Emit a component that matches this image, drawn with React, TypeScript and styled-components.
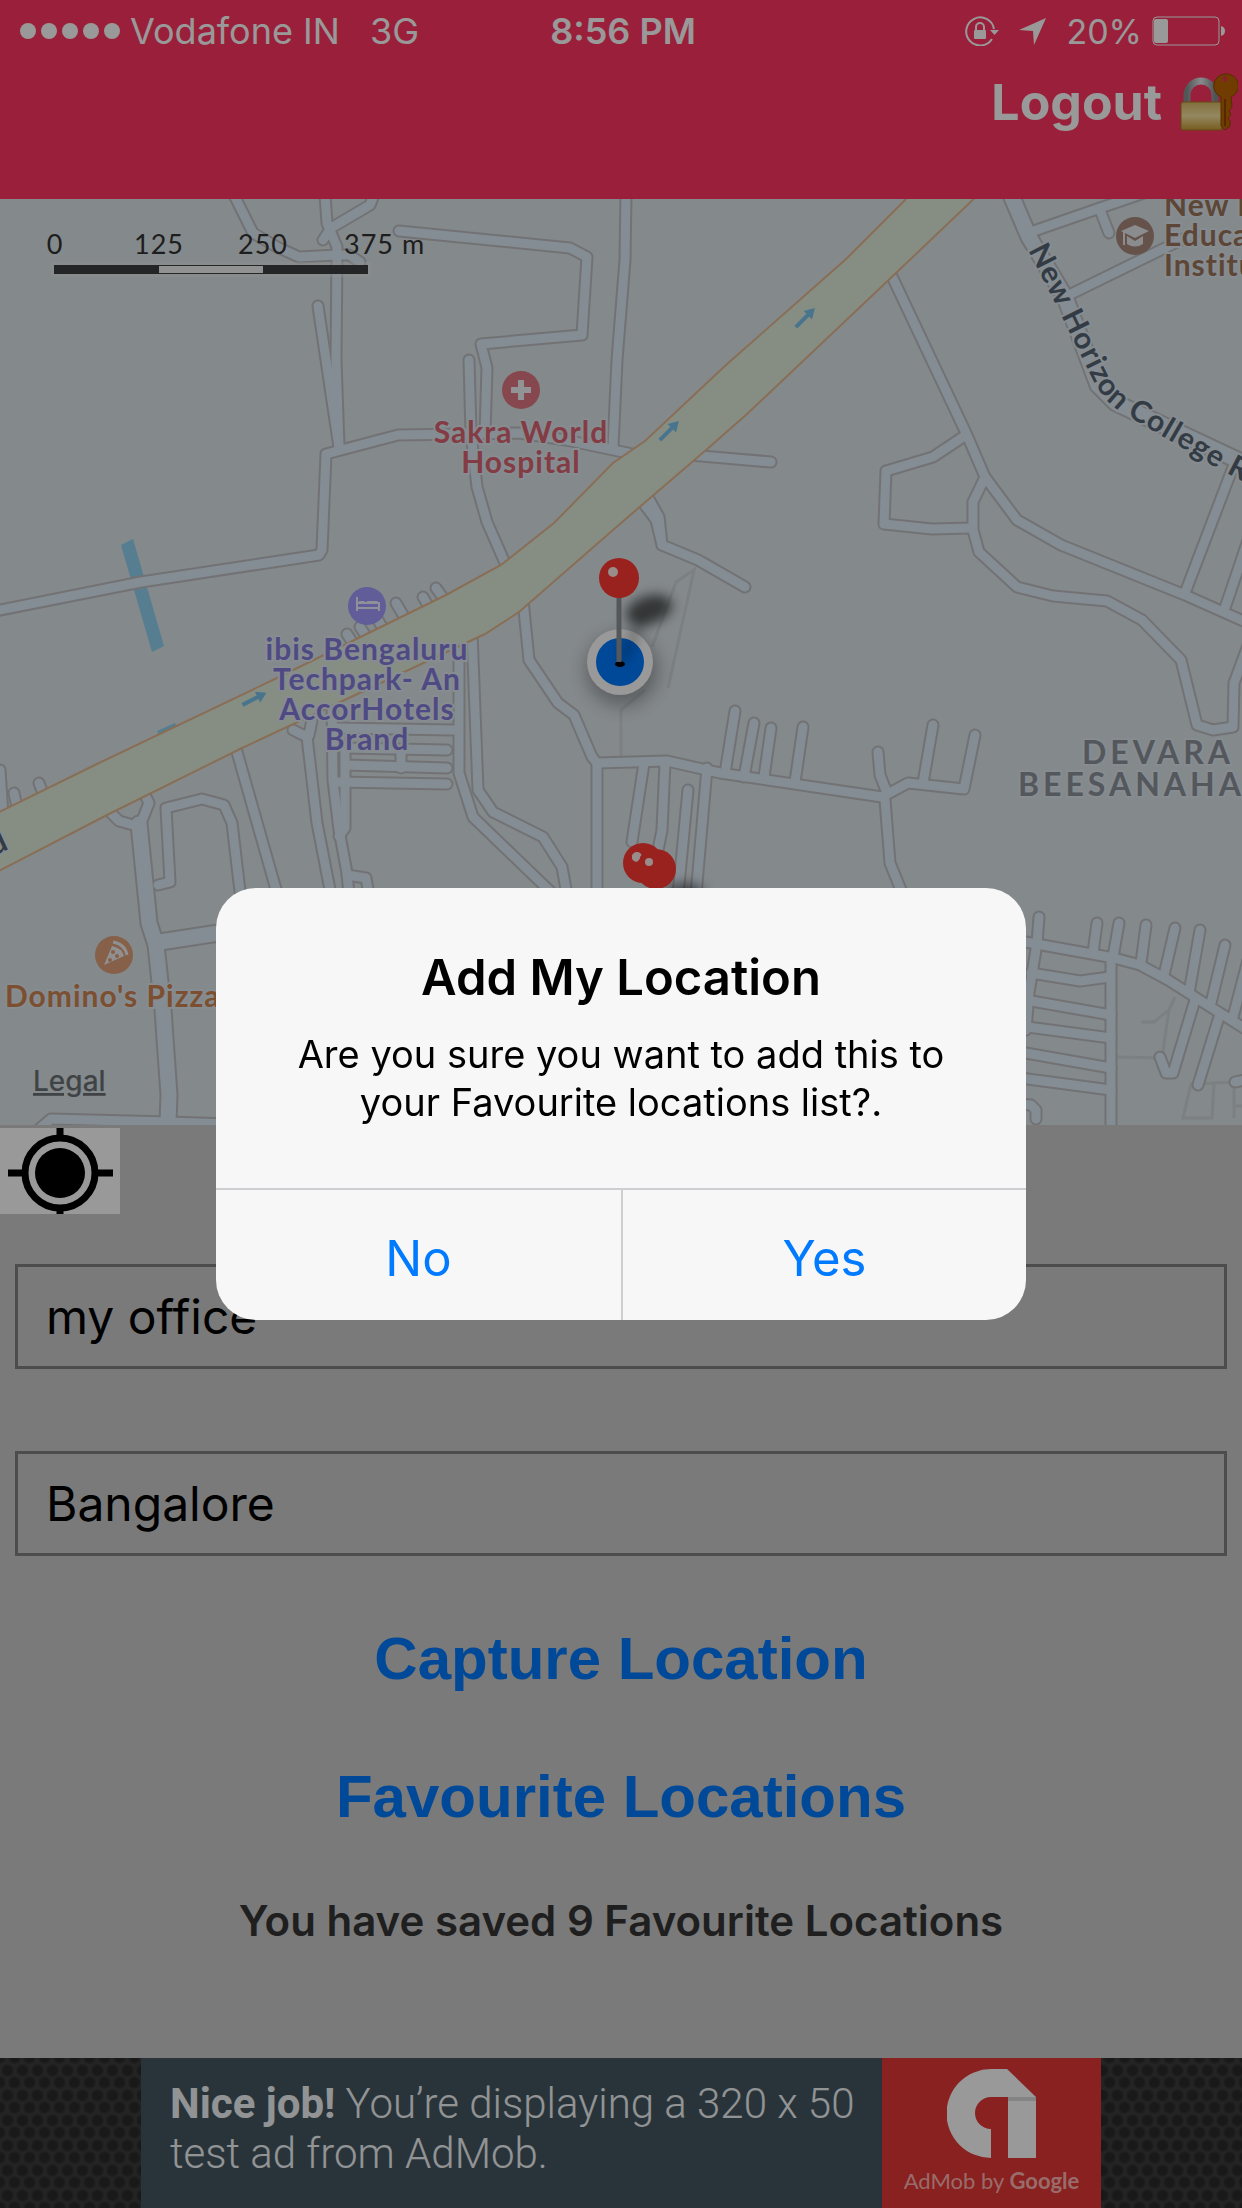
import React, { useId, useState } from 'react';
import styled, { createGlobalStyle } from 'styled-components';

const GlobalStyle = createGlobalStyle`
  * { box-sizing: border-box; }
  body { margin: 0; background: #cbcbcb; font-family: Inter, "Liberation Sans", sans-serif; }
  button { border: 0; padding: 0; background: none; font-family: inherit; }
`;

const Screen = styled.div`
  min-height: 100vh;
  display: flex;
  flex-direction: column;
  overflow: hidden;
`;

const Header = styled.header`
  height: 199px;
  background: #ff3562;
  color: #fff;
`;

const StatusBar = styled.div`
  display: grid;
  grid-template-columns: 1fr auto 1fr;
  align-items: center;
  height: 62px;
  padding: 0 16px 0 20px;
  font-size: 36px;
`;

const StatusGroup = styled.div`
  display: flex;
  align-items: center;
  gap: 10px;
`;

const StatusIcons = styled.div`
  display: flex;
  align-items: center;
  justify-content: flex-end;
  gap: 20px;
  font-size: 34px;
`;

const SignalDots = styled.div`
  display: flex;
  gap: 5px;
  i { width: 16px; height: 16px; border-radius: 50%; background: #fff; }
`;

const Network = styled.span`
  padding-left: 20px;
`;

const Time = styled.span`
  font-weight: 600;
`;

const NavBar = styled.div`
  display: flex;
  justify-content: flex-end;
  padding: 4px 4px 0 0;
`;

const LogoutButton = styled.button`
  display: flex;
  align-items: center;
  gap: 18px;
  height: 72px;
  color: #fff;
  font-size: 50px;
  font-weight: 700;
`;

const MapFrame = styled.section`
  height: 926px;
  overflow: hidden;
  background: #dce4e9;
`;

const MapCanvas = styled.svg`
  display: block;
  width: 100%;
  height: 100%;
`;

const PoiLabel = styled.text`
  font-family: Lato, "Open Sans", sans-serif;
  font-size: 30px;
  font-weight: 700;
  letter-spacing: 1px;
  paint-order: stroke;
  stroke: #dfe9f1;
  stroke-width: 4px;
`;

const RoadLabel = styled(PoiLabel)`
  fill: #566574;
`;

const AreaLabel = styled(PoiLabel)`
  fill: #8c939c;
  font-size: 32px;
  letter-spacing: 4px;
`;

const ScaleLabel = styled.text`
  font-family: Lato, "Open Sans", sans-serif;
  font-size: 27px;
  letter-spacing: 1px;
  fill: #333;
`;

const LegalLabel = styled.text`
  font-size: 28px;
  font-weight: 500;
  fill: #6b7074;
  text-decoration: underline;
`;

const LocateButton = styled.button`
  display: block;
  width: 120px;
  height: 86px;
  margin-top: 3px;
  background: #fff;
  svg { display: block; }
`;

const Form = styled.form`
  display: flex;
  flex-direction: column;
  gap: 82px;
  padding: 50px 15px 0;
`;

const Field = styled.input`
  width: 100%;
  height: 105px;
  padding: 0 28px;
  border: 3px solid #808080;
  border-radius: 0;
  background: transparent;
  color: #000;
  font-family: inherit;
  font-size: 48px;
  outline: 0;
`;

const Actions = styled.div`
  display: flex;
  flex-direction: column;
  align-items: center;
  gap: 38px;
  padding-top: 53px;
`;

const ActionButton = styled.button`
  color: #007aff;
  font-family: "Liberation Sans", Arial, sans-serif;
  font-size: 60px;
  font-weight: 700;
  line-height: 100px;
`;

const SavedNote = styled.p`
  margin: 48px 0 60px;
  color: #353535;
  text-align: center;
  font-size: 42px;
  font-weight: 600;
  line-height: 52px;
`;

const AdStrip = styled.aside`
  display: flex;
  justify-content: center;
  height: 150px;
  margin-top: auto;
  background-color: #3c3c3c;
  background-image: radial-gradient(circle, #2a2a2a 4px, transparent 7px),
    radial-gradient(circle, #2a2a2a 4px, transparent 7px);
  background-size: 15px 25px;
  background-position: 0 0, 7px 12px;
`;

const AdCopy = styled.p`
  width: 741px;
  margin: 0;
  padding: 21px 0 0 29px;
  background: #445862;
  color: #f4f6f7;
  font-family: Roboto, sans-serif;
  font-size: 42px;
  font-weight: 300;
  line-height: 50px;
  b { font-weight: 700; }
`;

const AdBrand = styled.div`
  display: flex;
  flex-direction: column;
  align-items: center;
  width: 219px;
  padding-top: 10px;
  background: #e33735;
  color: #ffb5b2;
  font-family: Lato, sans-serif;
  font-size: 22px;
  line-height: 28px;
  svg { margin-bottom: 9px; }
`;

const Backdrop = styled.div`
  position: fixed;
  inset: 0;
  display: flex;
  align-items: center;
  justify-content: center;
  background: rgba(0, 0, 0, 0.4);
`;

const Dialog = styled.div`
  width: 810px;
  max-width: 90vw;
  overflow: hidden;
  border-radius: 40px;
  background: #f7f7f7;
  color: #000;
  text-align: center;
`;

const DialogBody = styled.div`
  padding: 58px 48px 62px;
`;

const DialogTitle = styled.h2`
  margin: 0 0 20px;
  font-size: 49px;
  font-weight: 600;
  line-height: 64px;
`;

const DialogText = styled.p`
  margin: 0;
  font-size: 38px;
  line-height: 48px;
`;

const DialogActions = styled.div`
  display: grid;
  grid-template-columns: 1fr 1fr;
  border-top: 2px solid #cdcdd2;
`;

const DialogButton = styled.button`
  height: 130px;
  padding-top: 6px;
  color: #007aff;
  font-size: 49px;
  & + & { border-left: 2px solid #cdcdd2; }
`;

const roads = [
  'M234 195L253 233L277 247L299 257L337 255L349 255L360 262',
  'M325 195L327 223L337 247L336 360L339 447',
  'M374 195L370 205L331 228L323 240',
  'M399 231L570 248L587 257L582 335L481 344L487 368L485 433',
  'M318 306L330 387L339 447',
  'M-5 611L141 582L319 555L322 550L326 454L398 435L519 433L566 440L637 455',
  'M469 360L471 433L477 487L487 522L505 563',
  'M626 195L625 260L617 360L613 447',
  'M690 455L771 462',
  'M645 492L659 517L662 545L698 560L745 587',
  'M641 500L656 520L662 545',
  'M889 270L966 433L985 477L1017 520L1061 545L1185 595L1250 624',
  'M966 435L933 457L886 471L884 524L932 529L971 528',
  'M985 477L973 502L973 530L979 552L1017 587L1053 596L1107 601L1142 620L1181 660L1197 725L1213 730L1233 727L1234 683L1250 640',
  'M1233 467L1185 593',
  'M1248 540L1225 608',
  'M1031 232L1100 208L1147 192',
  'M1100 210L1109 233',
  'M1069 295L1175 243L1195 233',
  'M396 603L406 620', 'M423 597L432 612', 'M436 588L446 602', 'M347 634L356 648', 'M360 627L370 642', 'M378 620L386 634',
  'M14 793L18 812', 'M39 783L44 796', 'M0 770L3 815',
  'M145 795L149 803L143 818L140 827',
  'M109 811L119 821L137 826',
  'M158 885L170 882L166 808L202 799L224 805L232 823L241 900',
  'M235 745L279 900',
  'M293 730L303 735L309 735L312 720', 'M307 737L317 823L331 895',
  'M332 700L333 780L339 830L347 873L349 895',
  'M345 745L345 828L339 836', 'M347 875L366 878L369 895',
  'M337 728L453 730', 'M345 748L447 750', 'M345 765L447 768', 'M337 782L447 784', 'M401 750L401 768',
  'M459 640L459 773L473 817L556 897',
  'M472 632L478 790L493 812L543 837L562 867L567 895',
  'M523 600L529 660L558 703L574 715L592 757L597 763L667 761L720 773L882 797L908 783L964 789L975 735',
  'M597 763L597 895',
  'M933 725L923 783', 'M878 752L880 775L887 793', 'M885 800L890 863L903 895',
  'M735 711L725 773', 'M754 723L744 777', 'M771 728L764 777', 'M803 727L795 782',
  'M644 763L632 842', 'M665 763L662 830L656 860', 'M688 790L678 895', 'M707 768L696 895',
  'M1020 941L1114 958L1140 965L1168 980L1250 1032',
  'M1039 917L1037 943L1029 993L1026 1030',
  'M1097 923L1093 953', 'M1119 923L1113 957', 'M1146 925L1141 963', 'M1175 928L1164 975',
  'M1200 930L1189 993', 'M1225 945L1211 1003', 'M1248 960L1233 1017',
  'M1111 963L1111 1130',
  'M1031 973L1080 981L1110 977', 'M1020 999L1111 1015', 'M1020 1026L1111 1038', 'M1020 1052L1111 1068', 'M1020 1078L1111 1090',
  'M1020 1104L1031 1105L1036 1110L1036 1119',
  'M1195 1000L1173 1073L1166 1073L1160 1057', 'M1219 1017L1198 1085', 'M1235 1082L1250 1079',
  'M38 1130L51 1119L168 1122L230 1124',
];

const wideRoads = [
  'M1011 195L1029 237L1065 297L1098 385L1116 403L1250 466',
  'M139 824L149 923L156 945L163 1010L169 1095L168 1122',
  'M160 942L225 932',
];

const footpaths = [
  'M652 647L676 582L694 570L668 688', 'M645 690L621 710L621 760',
  'M1175 997L1169 1010L1162 1057', 'M1141 1022L1154 1022L1169 1010', 'M1116 1057L1160 1058',
  'M1235 1082L1191 1084L1183 1118L1212 1118L1214 1084', 'M1234 1088L1234 1118M1234 1106L1242 1106',
];

const highwayEdge1 = 'M912 193L845 260L726 365L645 441L613 463L554 523L501 565L446 595L277 678L97 764L-5 814';
const highwayEdge2 = 'M-5 873L107 815L240 749L366 690L485 634L519 612L621 523L706 450L747 414L896 273L980 193';
const highwayFill = highwayEdge1 + highwayEdge2.replace('M', 'L') + 'Z';

function FlowArrow({ x, y, angle }: { x: number; y: number; angle: number }) {
  return (
    <g transform={`translate(${x} ${y}) rotate(${angle})`} stroke="#78c4ec" strokeWidth="4" fill="none">
      <path d="M-13 0H10" />
      <path d="M4 -6L14 0L4 6Z" fill="#78c4ec" stroke="none" />
    </g>
  );
}

function PinHead({ x, y }: { x: number; y: number }) {
  return (
    <g>
      <circle cx={x} cy={y} r="20" fill="#ff3a32" />
      <circle cx={x - 6} cy={y - 6} r="5" fill="#ffe9e6" />
    </g>
  );
}

function CityMap() {
  const id = useId();
  return (
    <MapCanvas viewBox="0 199 1242 926" preserveAspectRatio="xMidYMin slice" role="img" aria-label="Map">
      <defs>
        <path id={`${id}road`} d="M1028 250L1057 307L1092 378C1100 394 1108 403 1122 413L1136 421L1215 467L1290 506" />
        <filter id={`${id}blur`} x="-60%" y="-60%" width="220%" height="220%">
          <feGaussianBlur stdDeviation="6" />
        </filter>
        <filter id={`${id}halo`} x="-60%" y="-60%" width="220%" height="220%">
          <feGaussianBlur stdDeviation="9" />
        </filter>
      </defs>
      <path d="M121 545L133 539L164 646L152 652Z" fill="#8fd0f0" />
      <path d="M157 731L175 723L178 729L160 738Z" fill="#8fd0f0" />
      <g fill="none" stroke="#cdd5d8" strokeWidth="3">
        {footpaths.map((d) => <path key={d} d={d} />)}
      </g>
      <g fill="none" stroke="#bebfc1" strokeLinecap="round" strokeLinejoin="round">
        <g strokeWidth="13">{roads.map((d) => <path key={d} d={d} />)}</g>
        <g strokeWidth="19">{wideRoads.map((d) => <path key={d} d={d} />)}</g>
      </g>
      <g fill="none" stroke="#deebf7" strokeLinecap="round" strokeLinejoin="round">
        <g strokeWidth="9">{roads.map((d) => <path key={d} d={d} />)}</g>
        <g strokeWidth="15">{wideRoads.map((d) => <path key={d} d={d} />)}</g>
      </g>
      <path d={highwayFill} fill="#e0ecda" />
      <path d={highwayEdge1 + highwayEdge2} fill="none" stroke="#e5b88f" strokeWidth="2" />
      <FlowArrow x={805} y={318} angle={-45} />
      <FlowArrow x={669} y={431} angle={-45} />
      <FlowArrow x={254} y={699} angle={-27} />

      <circle cx="521" cy="390" r="19" fill="#e07782" />
      <path d="M518 380h6v7h7v6h-7v7h-6v-7h-7v-6h7z" fill="#f2f5f8" />
      <PoiLabel x="521" y="443" textAnchor="middle" fill="#dc6572">Sakra World</PoiLabel>
      <PoiLabel x="521" y="473" textAnchor="middle" fill="#dc6572">Hospital</PoiLabel>

      <circle cx="367" cy="606" r="19" fill="#a09bff" />
      <path d="M357 597v14M357 608h22v3M357 603h22v5" stroke="#eef0ff" strokeWidth="2" fill="none" />
      <path d="M359 603v-2h5l2 2zM367 601h10l2 2h-12z" fill="#eef0ff" />
      <g fill="#847cdc" textAnchor="middle">
        <PoiLabel x="367" y="660">ibis Bengaluru</PoiLabel>
        <PoiLabel x="367" y="690">Techpark- An</PoiLabel>
        <PoiLabel x="367" y="720">AccorHotels</PoiLabel>
        <PoiLabel x="367" y="750">Brand</PoiLabel>
      </g>

      <circle cx="1135" cy="236" r="19" fill="#a8897c" />
      <path d="M1121 231L1135 225L1149 231L1135 238Z" fill="#e6eaec" />
      <path d="M1127 236v8q8 5 16 0v-8l-8 5z" fill="#e6eaec" />
      <path d="M1124 232v13M1124 232l10 -1" stroke="#e6eaec" strokeWidth="2" fill="none" />
      <g fill="#9c7559">
        <PoiLabel x="1164" y="216">New Horizon</PoiLabel>
        <PoiLabel x="1164" y="246">Educational</PoiLabel>
        <PoiLabel x="1164" y="276">Institution</PoiLabel>
      </g>

      <circle cx="114" cy="955" r="19" fill="#e0a07a" />
      <path d="M104 965L112 946Q122 948 124 956Z" fill="#f0f1f2" />
      <path d="M113 942Q125 944 127 955" stroke="#f0f1f2" strokeWidth="3" fill="none" />
      <circle cx="113" cy="952" r="2" fill="#e0a07a" />
      <circle cx="117" cy="956" r="2" fill="#e0a07a" />
      <circle cx="110" cy="960" r="2" fill="#e0a07a" />
      <PoiLabel x="5" y="1007" fill="#cf8452">Domino's Pizza</PoiLabel>

      <RoadLabel>
        <textPath href={`#${id}road`}>New Horizon College Rd</textPath>
      </RoadLabel>
      <RoadLabel transform="translate(-6 856) rotate(-25)">d</RoadLabel>
      <AreaLabel x="1158" y="764" textAnchor="middle">DEVARA</AreaLabel>
      <AreaLabel x="1018" y="796">BEESANAHALLI</AreaLabel>

      <rect x="51" y="262" width="320" height="15" fill="#edeff0" opacity="0.4" />
      <rect x="54" y="265" width="314" height="9" fill="#3d3f42" />
      <rect x="159" y="266" width="104" height="7" fill="#f4f4f6" />
      <ScaleLabel x="55" y="254" textAnchor="middle">0</ScaleLabel>
      <ScaleLabel x="159" y="254" textAnchor="middle">125</ScaleLabel>
      <ScaleLabel x="263" y="254" textAnchor="middle">250</ScaleLabel>
      <ScaleLabel x="344" y="254">375 m</ScaleLabel>
      <LegalLabel x="33" y="1091">Legal</LegalLabel>

      <circle cx="622" cy="670" r="36" fill="#000" opacity="0.3" filter={`url(#${id}halo)`} />
      <circle cx="620" cy="662" r="33" fill="#fff" />
      <circle cx="620" cy="662" r="24" fill="#007aff" />
      <path d="M622 662L642 618" stroke="#000" strokeWidth="6" opacity="0.35" filter={`url(#${id}blur)`} />
      <ellipse cx="649" cy="610" rx="24" ry="14" transform="rotate(-18 649 610)" opacity="0.6" filter={`url(#${id}blur)`} />
      <ellipse cx="620" cy="664" rx="5" ry="3" fill="#000" />
      <path d="M619 594V662" stroke="#8e9296" strokeWidth="5" />
      <PinHead x={619} y={578} />
      <ellipse cx="684" cy="892" rx="20" ry="9" opacity="0.5" filter={`url(#${id}blur)`} />
      <PinHead x={643} y={863} />
      <circle cx="656" cy="869" r="20" fill="#ff3a32" />
      <circle cx="636" cy="857" r="4" fill="#ffe9e6" />
      <circle cx="649" cy="862" r="4" fill="#ffe9e6" />
    </MapCanvas>
  );
}

function OrientationLock() {
  return (
    <svg width="34" height="30" viewBox="0 0 34 30" fill="none" aria-hidden="true">
      <path d="M27 23A14 14 0 1 1 29 13" stroke="#fff" strokeWidth="2" />
      <path d="M25 14h9l-4.500 5z" fill="#fff" />
      <rect x="9" y="14" width="12" height="9" rx="1" fill="#fff" />
      <path d="M11 15v-4a4 4 0 0 1 8 0v4" stroke="#fff" strokeWidth="2" />
    </svg>
  );
}

function LocationArrow() {
  return (
    <svg width="27" height="27" viewBox="0 0 27 27" aria-hidden="true">
      <path d="M27 0L15 27L14 13L0 12Z" fill="#fff" />
    </svg>
  );
}

function Battery() {
  return (
    <svg width="74" height="30" viewBox="0 0 74 30" fill="none" aria-hidden="true">
      <rect x="1" y="1" width="66" height="28" rx="4" stroke="#fff" />
      <rect x="2" y="3" width="14" height="24" rx="2" fill="#fff" />
      <path d="M69 10q4 1 4 5t-4 5z" fill="#fff" />
    </svg>
  );
}

function LockAndKey() {
  return (
    <svg width="58" height="58" viewBox="0 0 58 58" fill="none" aria-hidden="true">
      <defs>
        <linearGradient id="brass" x1="0" y1="0" x2="0" y2="1">
          <stop offset="0" stopColor="#d9b865" />
          <stop offset="0.5" stopColor="#f6e3a1" />
          <stop offset="1" stopColor="#c79a35" />
        </linearGradient>
        <linearGradient id="steel" x1="0" y1="0" x2="1" y2="0">
          <stop offset="0" stopColor="#8b8f92" />
          <stop offset="0.5" stopColor="#e3e6e8" />
          <stop offset="1" stopColor="#85898c" />
        </linearGradient>
      </defs>
      <path d="M7 31V22a14 14 0 0 1 28 0v9" stroke="url(#steel)" strokeWidth="7" />
      <rect x="1" y="29" width="41" height="28" rx="2" fill="url(#brass)" stroke="#a87d22" />
      <path d="M45 1a12 12 0 0 0-4 23v29l4 4 5-4v-5l-2-3 3-3-2-4 3-4-1-10a12 12 0 0 0-6-23z" fill="#bb6400" stroke="#8f4a00" />
      <ellipse cx="45" cy="6" rx="2" ry="3" fill="#e32f57" />
      <path d="M45 26v27" stroke="#8a4500" strokeWidth="2" />
    </svg>
  );
}

function Crosshair() {
  return (
    <svg width="120" height="86" viewBox="0 0 120 86" fill="none" stroke="#000" aria-hidden="true">
      <circle cx="60" cy="45" r="35" strokeWidth="7" />
      <circle cx="60" cy="45" r="25" fill="#000" stroke="none" />
      <path d="M8 45H24M96 45H113M60 0V10M60 80V86" strokeWidth="7" />
    </svg>
  );
}

function AdMobLogo() {
  return (
    <svg width="90" height="90" viewBox="0 0 90 90" aria-hidden="true">
      <path d="M44 1H60L89 29V90H61V29H44A16 16 0 0 0 44 61V90A44 44 0 0 1 44 1Z" fill="#fff" />
      <path d="M61 29H89V33H61Z" fill="#dcdcdc" />
    </svg>
  );
}

export default function App() {
  const [name, setName] = useState('my office');
  const [city, setCity] = useState('Bangalore');
  const [asking, setAsking] = useState(true);
  const close = () => setAsking(false);

  return (
    <>
      <GlobalStyle />
      <Screen>
        <Header>
          <StatusBar>
            <StatusGroup>
              <SignalDots><i /><i /><i /><i /><i /></SignalDots>
              <span>Vodafone IN</span>
              <Network>3G</Network>
            </StatusGroup>
            <Time>8:56 PM</Time>
            <StatusIcons>
              <OrientationLock />
              <LocationArrow />
              <StatusGroup>
                <span>20%</span>
                <Battery />
              </StatusGroup>
            </StatusIcons>
          </StatusBar>
          <NavBar>
            <LogoutButton type="button">Logout <LockAndKey /></LogoutButton>
          </NavBar>
        </Header>
        <MapFrame><CityMap /></MapFrame>
        <LocateButton type="button" aria-label="Show my location"><Crosshair /></LocateButton>
        <Form>
          <Field aria-label="Location name" value={name} onChange={(e) => setName(e.target.value)} />
          <Field aria-label="City" value={city} onChange={(e) => setCity(e.target.value)} />
        </Form>
        <Actions>
          <ActionButton type="button" onClick={() => setAsking(true)}>Capture Location</ActionButton>
          <ActionButton type="button">Favourite Locations</ActionButton>
        </Actions>
        <SavedNote>You have saved 9 Favourite Locations</SavedNote>
        <AdStrip>
          <AdCopy><b>Nice job!</b> You’re displaying a 320 x 50 test ad from AdMob.</AdCopy>
          <AdBrand><AdMobLogo /><span>AdMob by <b>Google</b></span></AdBrand>
        </AdStrip>
      </Screen>
      {asking && (
        <Backdrop>
          <Dialog role="alertdialog" aria-modal="true" aria-labelledby="ask-title" aria-describedby="ask-text">
            <DialogBody>
              <DialogTitle id="ask-title">Add My Location</DialogTitle>
              <DialogText id="ask-text">Are you sure you want to add this to your Favourite locations list?.</DialogText>
            </DialogBody>
            <DialogActions>
              <DialogButton type="button" onClick={close}>No</DialogButton>
              <DialogButton type="button" onClick={close}>Yes</DialogButton>
            </DialogActions>
          </Dialog>
        </Backdrop>
      )}
    </>
  );
}
